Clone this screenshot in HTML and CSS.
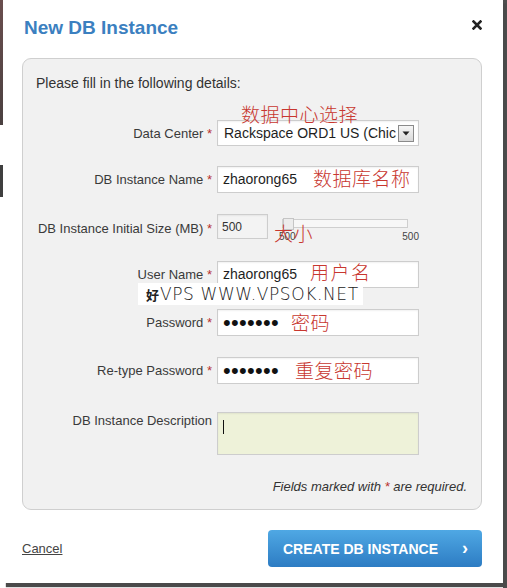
FILE: index.html
```html
<!DOCTYPE html>
<html>
<head>
<meta charset="utf-8">
<link rel="stylesheet" href="styles.css">
</head>
<body>
<div class="modal">
  <div class="head">
    <h1 class="title">New DB Instance</h1>
    <span class="close"><svg width="10" height="10" viewBox="0 0 10 10"><path d="M1.5 1.5 L8.5 8.5 M8.5 1.5 L1.5 8.5" stroke="#222" stroke-width="2.6" stroke-linecap="square"/></svg></span>
  </div>
  <div class="panel">
    <p class="intro">Please fill in the following details:</p>
    <div class="form">
      <div class="row r-sel">
        <span class="label">Data Center <span class="req">*</span></span>
        <div class="field">
          <div class="select"><span class="sel-text">Rackspace ORD1 US (Chic</span><span class="sel-btn"><svg width="8" height="5" viewBox="0 0 8 5"><path d="M0.5 0.5 H7.5 L4 4.5 Z" fill="#222"/></svg></span></div>
          <span class="note n1">数据中心选择</span>
        </div>
      </div>
      <div class="row">
        <span class="label">DB Instance Name <span class="req">*</span></span>
        <div class="field">
          <div class="input">zhaorong65</div>
          <span class="note n2">数据库名称</span>
        </div>
      </div>
      <div class="row r-size">
        <span class="label">DB Instance Initial Size (MB) <span class="req">*</span></span>
        <div class="field size-field">
          <div class="input small">500</div>
          <div class="slider">
            <div class="track"><span class="handle"></span></div>
            <div class="ticks"><span>500</span><span>500</span></div>
          </div>
          <span class="note n3">大小</span>
        </div>
      </div>
      <div class="row">
        <span class="label">User Name <span class="req">*</span></span>
        <div class="field">
          <div class="input">zhaorong65</div>
          <span class="note n4">用户名</span>
        </div>
        <span class="watermark"><b>好</b>VPS WWW.VPSOK.NET</span>
      </div>
      <div class="row">
        <span class="label">Password <span class="req">*</span></span>
        <div class="field">
          <div class="input dots">•••••••</div>
          <span class="note n5">密码</span>
        </div>
      </div>
      <div class="row">
        <span class="label">Re-type Password <span class="req">*</span></span>
        <div class="field">
          <div class="input dots">•••••••</div>
          <span class="note n6">重复密码</span>
        </div>
      </div>
      <div class="row desc">
        <span class="label top">DB Instance Description</span>
        <div class="field">
          <div class="textarea"><span class="caret"></span></div>
        </div>
      </div>
    </div>
    <p class="required">Fields marked with <span class="req">*</span> are required.</p>
  </div>
  <div class="foot">
    <a class="cancel" href="#">Cancel</a>
    <button class="create">CREATE DB INSTANCE <span class="chev">›</span></button>
  </div>
</div>
</body>
</html>
```

FILE: styles.css
```css
html, body {
  margin: 0;
  padding: 0;
}
body {
  width: 507px;
  height: 588px;
  overflow: hidden;
  background:
    linear-gradient(to bottom, #6a4e4e 0, #4a4040 125px, transparent 125px, transparent 165px, #3f3f3f 165px, #3f3f3f 197px, transparent 197px) no-repeat 0 0 / 3px 100%,
    linear-gradient(#4e4e4e, #4e4e4e) no-repeat 503px 0 / 4px 100%,
    #ffffff;
  font-family: "Liberation Sans", Arial, sans-serif;
  color: #333;
}
.modal {
  margin-left: 3px;
  width: 500px;
  height: 583px;
  background: #fff;
  box-shadow: 3px 4px 1px #4a4a4a;
  box-sizing: border-box;
}
.head {
  display: flex;
  justify-content: space-between;
  align-items: flex-start;
  height: 58px;
  padding: 17px 21px 0 21px;
  box-sizing: border-box;
}
.title {
  margin: 0;
  font-size: 19px;
  line-height: 22px;
  font-weight: bold;
  color: #3b80c0;
}
.close {
  display: block;
  margin-top: 3px;
  width: 10px;
  height: 10px;
}
.close svg { display: block; }
.panel {
  margin: 0 21px 0 19px;
  height: 452px;
  box-sizing: border-box;
  border: 1px solid #cfcfcf;
  border-radius: 9px;
  background: #f1f1f1;
  padding: 15px 14px 0 13px;
}
.intro {
  margin: 0;
  font-size: 14px;
  line-height: 18px;
  color: #333;
}
.form {
  margin-top: 28px;
  display: flex;
  flex-direction: column;
  gap: 21px;
}
.row {
  position: relative;
  display: grid;
  grid-template-columns: 176px 202px;
  column-gap: 5px;
  align-items: center;
  height: 27px;
}
.row.r-sel { height: 25px; }
.row.r-size { height: 26px; }
.row.desc {
  height: 43px;
  margin-top: 7px;
  align-items: start;
}
.label {
  text-align: right;
  font-size: 13px;
  color: #3a3a3a;
  white-space: nowrap;
}
.label.top { margin-top: 1px; }
.req { color: #b8312f; }
.field {
  position: relative;
  height: 100%;
}
.input, .select, .textarea {
  box-sizing: border-box;
  height: 100%;
  background: #fff;
  border: 1px solid #cdcdcd;
  box-shadow: inset 0 1px 2px rgba(0,0,0,0.06);
  font-size: 14px;
  line-height: 24px;
  color: #1e1e1e;
  padding-left: 5px;
}
.select {
  display: flex;
  align-items: center;
  justify-content: space-between;
  padding: 0 4px 0 6px;
}
.sel-text { white-space: nowrap; overflow: hidden; }
.sel-btn {
  width: 14px;
  height: 15px;
  border: 1px solid #8a8a8a;
  background: linear-gradient(#f6f6f6, #d9d9d9);
  display: flex;
  align-items: center;
  justify-content: center;
  flex: none;
}
.sel-btn svg { display: block; }
.size-field {
  display: flex;
  align-items: flex-start;
}
.input.small {
  width: 51px;
  height: 25px;
  font-size: 12px;
  padding-left: 4px;
  color: #333;
  background: #f3f3f3;
}
.slider {
  margin-left: 11px;
  width: 140px;
  padding-top: 5px;
  display: flex;
  flex-direction: column;
}
.track {
  position: relative;
  margin-left: 3px;
  width: 126px;
  height: 9px;
  box-sizing: border-box;
  border: 1px solid #cfcfcf;
  background: #f7f7f7;
}
.handle {
  position: absolute;
  left: 0;
  top: -2px;
  width: 11px;
  height: 12px;
  box-sizing: border-box;
  border: 1px solid #c5c5c5;
  background: #ececec;
}
.ticks {
  display: flex;
  justify-content: space-between;
  font-size: 10px;
  line-height: 12px;
  color: #444;
  margin-top: 3px;
}
.input.dots {
  font-size: 22px;
  line-height: 25px;
  letter-spacing: 0.3px;
  padding-left: 5px;
  color: #111;
}
.textarea {
  height: 43px;
  background: #eef2d9;
  position: relative;
}
.caret {
  position: absolute;
  left: 5px;
  top: 7px;
  width: 1px;
  height: 14px;
  background: #111;
}
.note {
  position: absolute;
  font-family: "Noto Sans CJK SC", sans-serif;
  font-weight: 300;
  font-size: 19px;
  line-height: 22px;
  color: #c8372f;
  white-space: nowrap;
  letter-spacing: 0.5px;
}
.n1 { left: 24px; top: -17px; }
.n2 { left: 96px; top: 1px; }
.n3 { left: 57px; top: 8px; }
.n4 { left: 93px; top: 0; letter-spacing: 1.5px; }
.n5 { left: 74px; top: 2px; }
.n6 { left: 78px; top: 2px; }
.watermark {
  position: absolute;
  left: 102px;
  top: 22px;
  height: 22px;
  line-height: 22px;
  padding: 0 4px 0 8px;
  background: #fff;
  font-family: "DejaVu Sans", sans-serif;
  font-weight: 300;
  font-size: 17px;
  letter-spacing: 0.6px;
  color: #222;
  white-space: nowrap;
  z-index: 2;
}
.watermark b {
  font-family: "Noto Sans CJK SC", sans-serif;
  font-size: 13px;
  font-weight: bold;
  letter-spacing: 0;
  margin-right: 1px;
}
.required {
  margin: 24px 0 0 0;
  text-align: right;
  font-style: italic;
  font-size: 13px;
  line-height: 16px;
  color: #333;
}
.foot {
  display: flex;
  justify-content: space-between;
  align-items: center;
  margin: 20px 21px 0 19px;
}
.cancel {
  font-size: 13px;
  color: #444;
  text-decoration: underline;
}
.create {
  width: 214px;
  height: 37px;
  border: 0;
  border-radius: 4px;
  background: linear-gradient(#4fa8e4, #2d7cc3);
  color: #fff;
  font-family: "Liberation Sans", Arial, sans-serif;
  font-weight: bold;
  font-size: 14px;
  display: flex;
  align-items: center;
  justify-content: space-between;
  padding: 0 14px 0 15px;
  box-sizing: border-box;
  cursor: pointer;
}
.chev { font-size: 18px; line-height: 18px; margin-top: -2px; }
```
